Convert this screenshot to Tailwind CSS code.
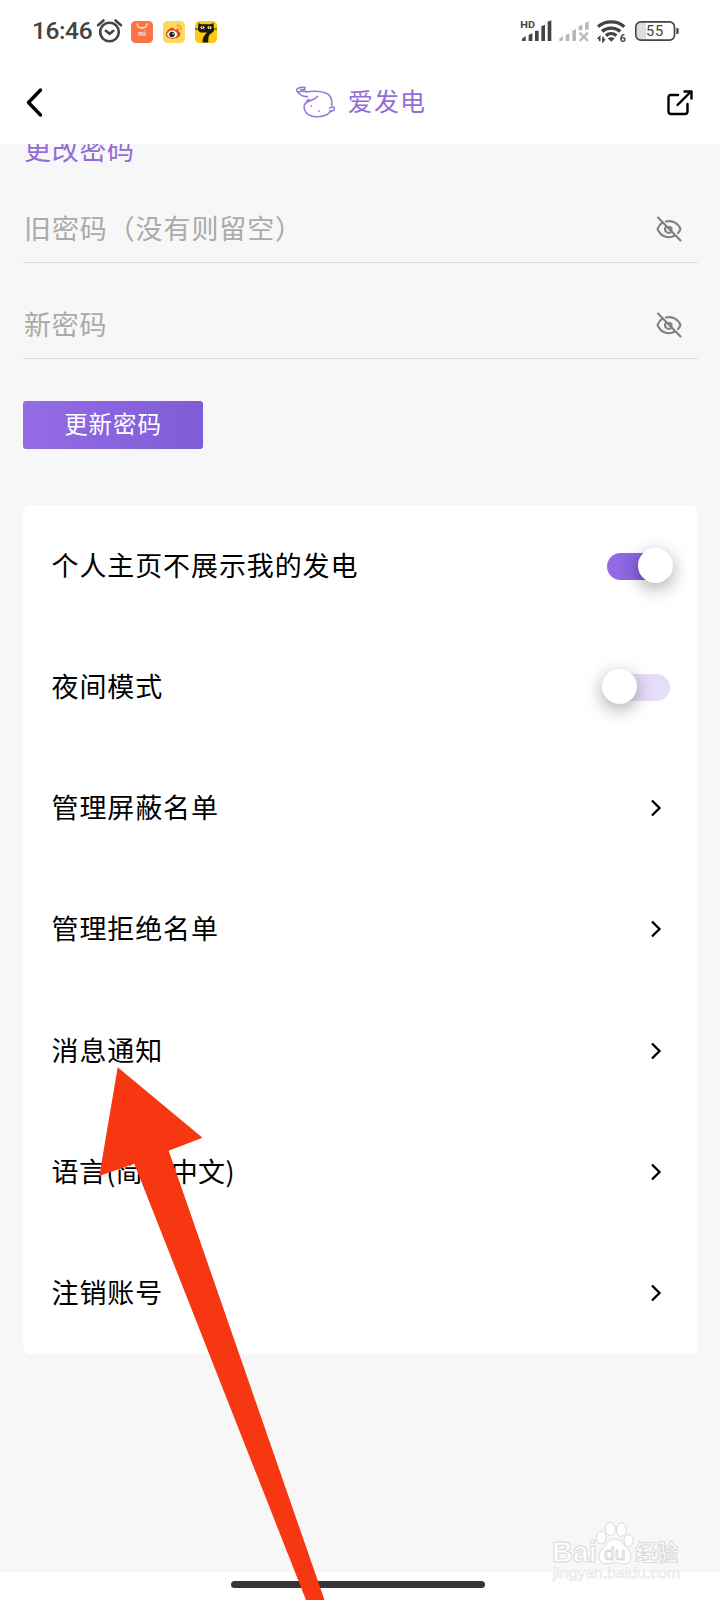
<!DOCTYPE html>
<html lang="zh-CN">

<head>
  <meta charset="UTF-8">
  <meta name="viewport" content="width=device-width, initial-scale=1.0">
  <title>爱发电</title>
  <script src="https://cdn.jsdelivr.net/npm/@tailwindcss/browser@4"></script>
</head>

<body class="bg-white">
  <div class="relative flex flex-col w-[720px] h-[1600px] overflow-hidden bg-[#f7f7f7] text-black font-['Noto_Sans_CJK_SC',sans-serif]">

    <!-- status bar -->
    <div class="flex items-center justify-between shrink-0 h-[62px] bg-white pl-8 pr-5 text-[#444]">
      <div class="flex items-center">
        <span class="w-[64px] pt-px text-[24.5px] leading-none font-medium tracking-[-0.4px] font-[Roboto,sans-serif]">16:46</span>
        <svg class="w-[27px] h-[26px]" viewBox="0 0 27 26" fill="none" stroke="#444" stroke-width="2.6" stroke-linecap="round">
          <circle cx="13.5" cy="14" r="9.3" />
          <path d="M9.8 12.8l3.8 3 3.8-3M2 7.2l5.5-4.7M25 7.2l-5.5-4.7" />
        </svg>
        <svg class="ml-2 mt-px w-[22px] h-[22px]" viewBox="0 0 22 22">
          <rect width="22" height="22" rx="4.5" fill="#fb7445" />
          <path d="M6 2.5a5 4.5 0 0 0 10 0" fill="none" stroke="#ffe3d6" stroke-width="1.4" />
          <text x="11" y="15.2" text-anchor="middle" font-family="Roboto" font-weight="700" font-size="6.5" fill="#ffe3d6">mi</text>
        </svg>
        <svg class="ml-[10px] mt-px w-[22px] h-[22px]" viewBox="0 0 22 22">
          <rect width="22" height="22" rx="4.5" fill="#fbd85f" />
          <path d="M3 13.5C3 9.5 8 6 10.5 7c1 .5.5 2 .5 2 3-1.5 5-.5 4.500 1.500 2.500.8 2.500 3 1 4.700C13 19 3.500 18.500 3 13.500z" fill="#e0402d" />
          <ellipse cx="9.3" cy="13.3" rx="5" ry="3.7" fill="#fff" />
          <circle cx="9" cy="13.5" r="2.7" fill="#222" />
          <circle cx="10" cy="12.7" r=".8" fill="#fff" />
          <path d="M13.500 4.500c3.500-.5 5.500 2 4.500 5M14 7.200c1.500-.2 2.300.7 2 2" fill="none" stroke="#f0982c" stroke-width="1.2" />
        </svg>
        <svg class="ml-[10px] mt-px w-[22px] h-[22px]" viewBox="0 0 22 22">
          <rect width="22" height="22" rx="4.5" fill="#fcca10" />
          <path d="M3.500 2l3 1.300h9L18.500 2l.5 8c-2 2.500-5 3-5.500 6l-.3 5.500H7.500c0-5 2-7.500 4.500-10H5.500C3.500 10.500 3 9 3 7z" fill="#1c1a12" />
          <path d="M0 8h4M18 8h4" stroke="#1c1a12" stroke-width=".9" />
          <ellipse cx="7.5" cy="6.5" rx="2" ry="1.5" fill="#fff2a8" />
          <ellipse cx="14.5" cy="6.5" rx="2" ry="1.5" fill="#fff2a8" />
          <path d="M7.500 5.500v1.800M14.500 5.500v1.800" stroke="#1c1a12" />
        </svg>
      </div>
      <!-- signal, wifi, battery -->
      <svg class="mt-[3px] w-[190px] h-[55px]" viewBox="0 0 570 165" fill="#444">
        <text x="31" y="70" font-family="Roboto" font-weight="700" font-size="29" textLength="44" lengthAdjust="spacingAndGlyphs">HD</text>
        <path d="M36 101l11-8v15H36zM56 90l11-5v23H56zM75 77h11v31H75zM94 64l11-5v49H94zM113 50l11-4v62h-11z" />
        <path fill="#b9b9b9" d="M148 101l11-8v15h-11zM167 90l11-5v23h-11zM187 77l11-5v36h-11zM206 64l11-5v17h-11zM225 54l11-5v25h-11z" />
        <path d="M209 83l25 25M234 83l-25 25" stroke="#b9b9b9" stroke-width="7" />
        <g fill="none" stroke="#444" stroke-width="10">
          <path d="M264 65c22-19 57-19 79 0" />
          <path d="M276 79c16-13 39-13 55 0" />
          <path d="M288 92c9-8 22-8 31 0" />
        </g>
        <path d="M293 100q11-7 21 0l-10 10z" />
        <path d="M269 109V96l-6 6M279 95v14l6-7" fill="none" stroke="#444" stroke-width="5" />
        <text x="329" y="111" font-family="Roboto" font-weight="700" font-size="32">6</text>
        <path d="M388 54h20v48h-20q-7 0-7-10V64q0-10 7-10z" fill="#ddd" />
        <rect x="377.5" y="50.5" width="116" height="55" rx="15" fill="none" stroke="#444" stroke-width="5" />
        <path d="M499 69h3q4 0 4 4v10q0 4-4 4h-3z" />
        <text x="434" y="94" text-anchor="middle" font-family="Roboto" font-size="44" fill="#444" textLength="52">55</text>
      </svg>
    </div>

    <!-- nav bar -->
    <div class="grid grid-cols-3 items-center shrink-0 h-[82px] bg-white pl-6 pr-[26px] pb-[3px]">
      <svg class="w-5 h-8" viewBox="0 0 20 32" fill="none" stroke="#000" stroke-width="3.4" stroke-linecap="round" stroke-linejoin="round">
        <path d="M16.500 4L4.500 16.500l12 12.500" />
      </svg>
      <div class="flex items-center justify-center gap-[13px] pl-[3px] text-[#946cd8]">
        <svg class="w-[40px] h-[34px]" viewBox="0 0 120 102" fill="none" stroke="#9a78dc" stroke-width="4.8" stroke-linecap="round" stroke-linejoin="round">
          <path d="M32 18C22 17 15 22 7 20 0 13 10 6 29 7c4 5-2 8-12 7M7 20c5 8 18 15 30 15M32 21c18-3 37-5 59 2 16 6 22 18 19 39" />
          <path d="M67 34C58 48 36 45 29 58c-6 16 6 35 31 37 24 2 43-7 48-18M42 44c-4 0-7 4-6 8M104 69c6-1 10-7 14 0 2 6-5 11-14 9" />
          <path d="M49 63v1M72 78v1" stroke-width="5" />
        </svg>
        <span class="-mt-[3px] text-[25px] leading-none tracking-[1.2px]">爱发电</span>
      </div>
      <svg class="justify-self-end w-7 h-7" viewBox="0 0 28 28" fill="none" stroke="#000" stroke-width="2.4" stroke-linejoin="round">
        <path stroke-linecap="round" d="M12 7H4.500Q2.500 7 2.500 9.500v14Q2.500 26 5 26H19q2.500 0 2.500-2.500V16M11.500 17L24.500 4" />
        <path d="M17.500 3.500H25.500v8" />
      </svg>
    </div>

    <!-- password form, scrolled under the nav bar -->
    <div class="h-[361px] shrink-0 overflow-hidden pl-[23px] pr-[22px]">
      <h2 class="-mt-[12px] h-[34px] pl-px text-[27px] leading-[34px] tracking-[0.7px] text-[#946cd8]">更改密码</h2>
      <div class="flex items-center justify-between mt-[29px] h-[68px] pr-4 border-b border-[#dedede]">
        <span class="pl-px pb-[3px] text-[27px] leading-none tracking-[0.9px] text-[#aaa]">旧密码（没有则留空）</span>
        <svg class="w-[26px] h-[26px]" viewBox="0 0 26 26" fill="none" stroke="#808080" stroke-width="2.1" stroke-linecap="round">
          <path d="M2 1.500l22.500 23M10 5.500c6-1.500 12 1.500 14.500 7.500-.5 1.600-1.300 2.800-2.500 4M6.500 6.500C4 8 2.500 10 1.500 13c3.500 8 11 10 17.500 6.500M10 10.500c-3 4.500 2.500 8.500 6 5M13 11c2 0 3 1.500 2.500 3" />
        </svg>
      </div>
      <div class="flex items-center justify-between mt-[28px] h-[68px] pr-4 border-b border-[#dedede]">
        <span class="pl-px pb-[3px] text-[27px] leading-none tracking-[0.7px] text-[#aaa]">新密码</span>
        <svg class="w-[26px] h-[26px]" viewBox="0 0 26 26" fill="none" stroke="#808080" stroke-width="2.1" stroke-linecap="round">
          <path d="M2 1.500l22.500 23M10 5.500c6-1.500 12 1.500 14.500 7.500-.5 1.600-1.300 2.800-2.500 4M6.500 6.500C4 8 2.500 10 1.500 13c3.500 8 11 10 17.500 6.500M10 10.500c-3 4.500 2.500 8.500 6 5M13 11c2 0 3 1.500 2.500 3" />
        </svg>
      </div>
      <button class="mt-[42px] w-[180px] h-12 pb-[3px] rounded-[3px] bg-linear-to-r from-[#946ce6] to-[#7f5cd7] text-[23.5px] leading-none tracking-[0.9px] text-white">更新密码</button>
    </div>

    <!-- settings list -->
    <div class="flex flex-col shrink-0 h-[849px] ml-[23px] mr-[22px] pl-[28.5px] rounded-lg bg-white text-[27px] leading-none tracking-[0.9px]">
      <div class="flex flex-1 items-center justify-between pr-7">
        <span class="pb-[3px]">个人主页不展示我的发电</span>
        <div class="flex items-center justify-end mt-px w-[63px] h-[27px] rounded-full bg-linear-to-r from-[#946ce6] to-[#7f5cd7]">
          <div class="-mr-[3px] mb-px w-[35px] h-[35px] shrink-0 rounded-full bg-white shadow-[0_5px_18px_rgba(0,0,0,0.35)]"></div>
        </div>
      </div>
      <div class="flex flex-1 items-center justify-between pr-7">
        <span class="pb-[3px]">夜间模式</span>
        <div class="flex items-center mt-px w-[63px] h-[27px] rounded-full bg-[#e6def9]">
          <div class="-ml-[5px] mb-px w-[35px] h-[35px] shrink-0 rounded-full bg-white shadow-[0_5px_18px_rgba(0,0,0,0.35)]"></div>
        </div>
      </div>
      <div class="flex flex-1 items-center justify-between pr-9">
        <span class="pb-[3px]">管理屏蔽名单</span>
        <svg class="w-3 h-5" viewBox="0 0 12 20" fill="none" stroke="#000" stroke-width="2.3"><path d="M2 2.500L9.500 10 2 17.500" /></svg>
      </div>
      <div class="flex flex-1 items-center justify-between pr-9">
        <span class="pb-[3px]">管理拒绝名单</span>
        <svg class="w-3 h-5" viewBox="0 0 12 20" fill="none" stroke="#000" stroke-width="2.3"><path d="M2 2.500L9.500 10 2 17.500" /></svg>
      </div>
      <div class="flex flex-1 items-center justify-between pr-9">
        <span class="pb-[3px]">消息通知</span>
        <svg class="w-3 h-5" viewBox="0 0 12 20" fill="none" stroke="#000" stroke-width="2.3"><path d="M2 2.500L9.500 10 2 17.500" /></svg>
      </div>
      <div class="flex flex-1 items-center justify-between pr-9">
        <span class="pb-[3px] tracking-[0.4px]">语言(简体中文)</span>
        <svg class="w-3 h-5" viewBox="0 0 12 20" fill="none" stroke="#000" stroke-width="2.3"><path d="M2 2.500L9.500 10 2 17.500" /></svg>
      </div>
      <div class="flex flex-1 items-center justify-between pr-9">
        <span class="pb-[3px]">注销账号</span>
        <svg class="w-3 h-5" viewBox="0 0 12 20" fill="none" stroke="#000" stroke-width="2.3"><path d="M2 2.500L9.500 10 2 17.500" /></svg>
      </div>
    </div>

    <!-- home indicator -->
    <div class="flex justify-center mt-auto shrink-0 h-7 bg-white pt-[9px] pr-[5px]">
      <div class="w-[254px] h-[7px] rounded-full bg-[#363636]"></div>
    </div>

    <!-- watermark -->
    <svg class="absolute left-[530px] top-[1500px] w-[190px] h-[100px]" viewBox="0 0 570 300" fill="#fff" stroke="#d9d9d9" stroke-width="3" stroke-linejoin="round">
      <text x="66" y="187" font-family="Liberation Sans" font-weight="700" font-size="88" textLength="134" lengthAdjust="spacingAndGlyphs">Bai</text>
      <ellipse cx="214" cy="113" rx="15" ry="19" />
      <ellipse cx="241" cy="87" rx="15" ry="20" />
      <ellipse cx="274" cy="89" rx="15" ry="20" />
      <ellipse cx="296" cy="122" rx="14" ry="18" />
      <path d="M255 117c-20 0-25 18-38 30-14 13-15 40 7 44 12 2 20-3 31-3s20 5 31 3c22-4 21-31 7-44-13-12-18-30-38-30z" />
      <text x="222" y="180" font-family="Liberation Sans" font-size="56" textLength="64" lengthAdjust="spacingAndGlyphs">du</text>
      <text x="315" y="180" font-family="Noto Sans CJK SC" font-weight="700" font-size="65">经验</text>
      <text x="68" y="235" font-family="Liberation Sans" font-size="42" stroke="#e6e6e6" stroke-width="2" textLength="382" lengthAdjust="spacingAndGlyphs">jingyan.baidu.com</text>
    </svg>

    <!-- pointer arrow -->
    <svg class="absolute left-0 top-0 w-[720px] h-[1600px] pointer-events-none" viewBox="0 0 720 1600">
      <path d="M117.700 1067.300L202.500 1137.700 168.700 1150.700 324.500 1600H306L134.300 1163.700 99.300 1176z" fill="#f63711" />
    </svg>
  </div>
</body>

</html>
